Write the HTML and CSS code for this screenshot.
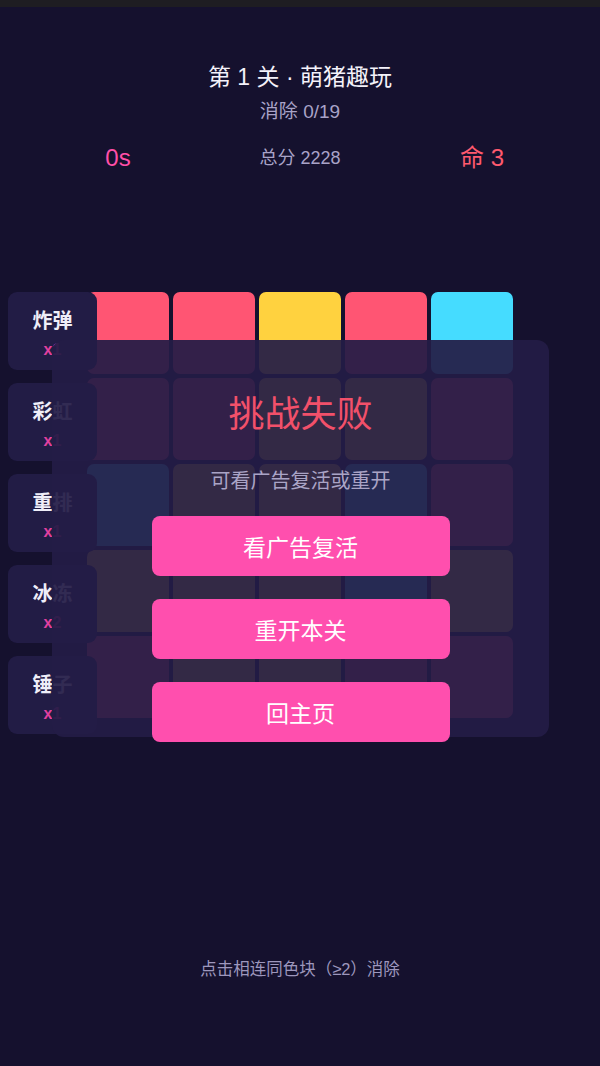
FILE: index.html
```html
<!DOCTYPE html>
<html lang="zh-CN">
<head>
    <meta charset="UTF-8">
    <meta name="viewport" content="width=device-width, initial-scale=1.0">
    <title>萌猪趣玩 - 第 1 关</title>
    <link rel="stylesheet" href="styles.css">
</head>
<body>
    <div class="chrome"></div>

    <header class="hud">
        <h1 class="level">第 1 关 · 萌猪趣玩</h1>
        <div class="progress">消除 0/19</div>
        <div class="stats">
            <span class="time">0s</span>
            <span class="score">总分 2228</span>
            <span class="lives">命 3</span>
        </div>
    </header>

    <main class="stage">
        <div class="board">
            <div class="tile red"></div><div class="tile red"></div><div class="tile yellow"></div><div class="tile red"></div><div class="tile cyan"></div>
            <div class="tile red"></div><div class="tile red"></div><div class="tile yellow"></div><div class="tile yellow"></div><div class="tile red"></div>
            <div class="tile cyan"></div><div class="tile yellow"></div><div class="tile yellow"></div><div class="tile cyan"></div><div class="tile red"></div>
            <div class="tile yellow"></div><div class="tile yellow"></div><div class="tile yellow"></div><div class="tile cyan"></div><div class="tile yellow"></div>
            <div class="tile red"></div><div class="tile yellow"></div><div class="tile yellow"></div><div class="tile red"></div><div class="tile red"></div>
        </div>

        <div class="tools">
            <div class="tool"><span class="tool-name">炸弹</span><span class="tool-count">x1</span></div>
            <div class="tool"><span class="tool-name">彩虹</span><span class="tool-count">x1</span></div>
            <div class="tool"><span class="tool-name">重排</span><span class="tool-count">x1</span></div>
            <div class="tool"><span class="tool-name">冰冻</span><span class="tool-count">x2</span></div>
            <div class="tool"><span class="tool-name">锤子</span><span class="tool-count">x1</span></div>
        </div>

        <div class="modal">
            <h2 class="modal-title">挑战失败</h2>
            <p class="modal-text">可看广告复活或重开</p>
            <button class="btn">看广告复活</button>
            <button class="btn">重开本关</button>
            <button class="btn">回主页</button>
        </div>
    </main>

    <p class="hint">点击相连同色块（≥2）消除</p>
</body>
</html>
```

FILE: styles.css
```css
body {
    margin: 0;
    min-height: 1066px;
    background: #15112e;
    font-family: "Liberation Sans", "Noto Sans CJK SC", sans-serif;
    color: #f4f2fa;
}
.chrome {
    height: 7px;
    background: #1e1d22;
}
.hud {
    padding-top: 55px;
    text-align: center;
}
.level {
    margin: 0;
    font-size: 23px;
    line-height: 30px;
    font-weight: normal;
    color: #f4f2fa;
}
.progress {
    margin-top: 8px;
    font-size: 19px;
    line-height: 24px;
    color: #a9a3c8;
}
.stats {
    display: flex;
    margin-top: 19px;
    padding: 0 27px;
    line-height: 30px;
}
.stats span {
    flex: 1;
    text-align: center;
}
.time {
    font-size: 24px;
    color: #ff4fa8;
}
.score {
    font-size: 18px;
    color: #a9a3c8;
}
.lives {
    font-size: 24px;
    color: #ff5a6e;
}

.stage {
    position: relative;
    height: 445px;
    margin-top: 119px;
}
.board {
    display: grid;
    grid-template-columns: repeat(5, 82px);
    grid-auto-rows: 82px;
    gap: 4px;
    width: 426px;
    margin: 0 auto;
}
.tile {
    border-radius: 7px;
}
.red { background: #ff5573; }
.yellow { background: #ffd23f; }
.cyan { background: #45dcff; }

.tools {
    position: absolute;
    left: 8px;
    top: 0;
    width: 89px;
    display: flex;
    flex-direction: column;
    gap: 13px;
}
.tool {
    height: 78px;
    box-sizing: border-box;
    padding-top: 17px;
    display: flex;
    flex-direction: column;
    align-items: center;
    gap: 8px;
    background: #221c45;
    border-radius: 9px;
}
.tool-name {
    font-size: 20px;
    line-height: 24px;
    font-weight: bold;
    color: #efeef8;
}
.tool-count {
    font-size: 16px;
    line-height: 18px;
    font-weight: bold;
    color: #e0409f;
}

.modal {
    position: absolute;
    left: 52px;
    top: 48px;
    width: 497px;
    height: 397px;
    box-sizing: border-box;
    padding-top: 53px;
    display: flex;
    flex-direction: column;
    align-items: center;
    background: rgba(35, 28, 70, 0.93);
    border-radius: 12px;
}
.modal > * {
    flex-shrink: 0;
}
.modal-title {
    margin: 0;
    font-size: 36px;
    line-height: 44px;
    font-weight: normal;
    color: #f2506a;
}
.modal-text {
    margin: 30px 0 21px;
    font-size: 20px;
    line-height: 28px;
    color: #aaa4c6;
}
.btn {
    width: 298px;
    height: 60px;
    margin-bottom: 23px;
    border: none;
    border-radius: 8px;
    background: #ff4fae;
    color: #fff;
    font-family: inherit;
    font-size: 23px;
    cursor: pointer;
}

.hint {
    margin: 220px 0 0;
    text-align: center;
    font-size: 16.5px;
    line-height: 24px;
    color: #9d97bd;
}
```
